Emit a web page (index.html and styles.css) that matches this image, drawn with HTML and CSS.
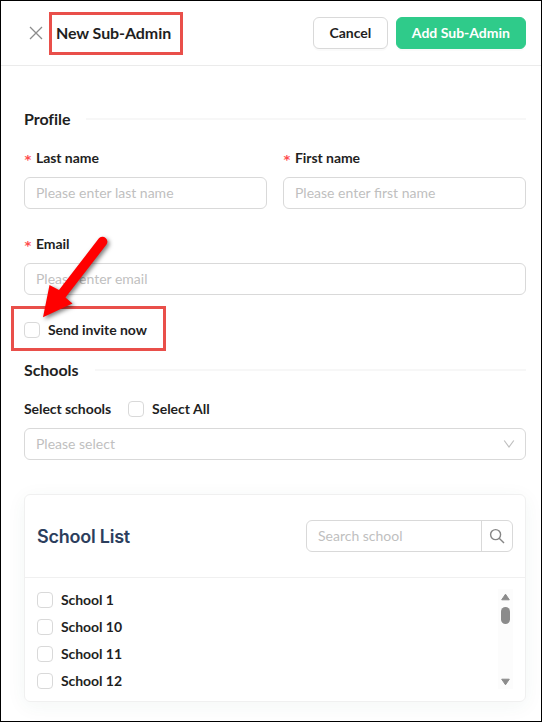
FILE: index.html
```html
<!DOCTYPE html>
<html lang="en">
<head>
<meta charset="utf-8">
<title>New Sub-Admin</title>
<link rel="stylesheet" href="styles.css">
</head>
<body>
<div class="drawer">
  <header class="header">
    <svg class="close" viewBox="0 0 14 14"><path d="M1 1 13 13M13 1 1 13"/></svg>
    <h1 class="title"><span>New Sub-Admin</span></h1>
    <button class="btn cancel">Cancel</button>
    <button class="btn primary">Add Sub-Admin</button>
  </header>
  <main class="body">
    <h2 class="divider"><span>Profile</span></h2>
    <div class="row">
      <div class="field">
        <label class="label"><i class="req">*</i><span>Last name</span></label>
        <div class="input"><span>Please enter last name</span></div>
      </div>
      <div class="field">
        <label class="label"><i class="req">*</i><span>First name</span></label>
        <div class="input"><span>Please enter first name</span></div>
      </div>
    </div>
    <div class="field email">
      <label class="label"><i class="req">*</i><span>Email</span></label>
      <div class="input"><span>Please enter email</span></div>
    </div>
    <div class="invite">
      <span class="box"></span><span>Send invite now</span>
      <svg class="arrow" viewBox="0 0 80 70"><path d="M66.700 5.600A4.900 4.900 0 0 1 74.300 11.800L33.500 64.500 40.500 70.500 11 84.300 17.500 52 27 57Z"/></svg>
    </div>
    <h2 class="divider schools"><span>Schools</span></h2>
    <div class="select-head">
      <span class="select-label">Select schools</span><span class="box"></span><span>Select All</span>
    </div>
    <div class="input select"><span>Please select</span>
      <svg class="chevron" viewBox="0 0 12 12"><path d="M1.200 2.500 6 9 10.800 2.500"/></svg>
    </div>
    <section class="card">
      <div class="card-head">
        <h3 class="card-title">School List</h3>
        <div class="search">
          <span class="search-text">Search school</span>
          <span class="search-btn"><svg class="lens" viewBox="0 0 16 16"><circle cx="6.600" cy="6.600" r="5"/><path d="M10.200 10.200 15 15"/></svg></span>
        </div>
      </div>
      <div class="list">
        <div class="items">
          <div class="item"><span class="box"></span>School 1</div>
          <div class="item"><span class="box"></span>School 10</div>
          <div class="item"><span class="box"></span>School 11</div>
          <div class="item"><span class="box"></span>School 12</div>
        </div>
        <div class="scrollbar">
          <svg class="tri" viewBox="0 0 9 8"><path d="M4.500 1.200 8.300 6.800H.7Z"/></svg>
          <div class="thumb"></div>
          <svg class="tri down" viewBox="0 0 9 8"><path d="M4.500 6.800 8.300 1.200H.7Z"/></svg>
        </div>
      </div>
    </section>
  </main>
</div>
</body>
</html>
```
FILE: styles.css
```css
* { box-sizing: border-box; }
body {
  margin: 0;
  font: 700 14px/22px Lato, sans-serif;
  color: #1f1f1f;
  background: #fff;
}
.drawer {
  width: 542px;
  height: 722px;
  border: 1px solid #000;
  overflow: hidden;
}
.header {
  display: flex;
  align-items: center;
  height: 65px;
  padding: 0 15px 0 28px;
  border-bottom: 1px solid #ebebeb;
}
.close { width: 14px; height: 14px; stroke: #8c8c8c; stroke-width: 1.3; fill: none; }
.title {
  display: flex;
  align-items: center;
  width: 134px;
  height: 43px;
  margin: 0 auto 0 6px;
  padding-left: 4px;
  border: 3px solid #e94f4a;
  font-size: 16px;
  font-weight: 700;
  letter-spacing: -.08px;
  white-space: nowrap;
}
.btn {
  height: 32px;
  padding: 0 15px;
  border: 1px solid #d9d9d9;
  border-radius: 6px;
  background: #fff;
  box-shadow: 0 2px 0 rgba(0,0,0,.02);
  color: #1f1f1f;
  font: 700 14px/22px Lato, sans-serif;
}
.cancel { width: 75px; }
.primary { margin-left: 8px; border-color: #2fcb8a; background: #2fcb8a; color: #fff; }
.body { padding: 41px 15px 0 23px; }
.divider {
  display: flex;
  align-items: center;
  gap: 16px;
  height: 24px;
  margin: 0;
  font-size: 16px;
  font-weight: 700;
  letter-spacing: -.05px;
}
.divider::after { content: ""; flex: 1; height: 2px; background: #f7f7f7; }
.row { display: grid; grid-template-columns: 1fr 1fr; gap: 16px; margin-top: 16px; }
.label { display: flex; height: 22px; margin-bottom: 8px; letter-spacing: -.06px; }
.req { width: 12px; color: #ff4d4f; font: 700 13px/25px "DejaVu Sans Mono", monospace; }
.input {
  display: flex;
  align-items: center;
  height: 32px;
  padding: 0 11px;
  border: 1px solid #d9d9d9;
  border-radius: 6px;
  color: #bfbfbf;
  font-weight: 400;
}
.email { margin-top: 24px; }
.invite {
  position: relative;
  display: flex;
  align-items: center;
  gap: 8px;
  width: 155px;
  height: 45px;
  margin: 11px 0 0 -13px;
  padding: 2px 0 0 10px;
  border: 3px solid #e94f4a;
  letter-spacing: -.06px;
}
.box { flex: none; width: 16px; height: 16px; border: 1px solid #d9d9d9; border-radius: 4px; background: #fff; }
.arrow {
  position: absolute;
  left: 18px;
  top: -76px;
  width: 80px;
  height: 70px;
  overflow: visible;
  fill: #f00;
  filter: drop-shadow(2px 2px 2px rgba(0,0,0,.5));
}
.schools { margin-top: 7px; }
.select-head { display: flex; align-items: center; height: 22px; margin-top: 16px; }
.select-label { width: 88px; white-space: nowrap; letter-spacing: -.06px; }
.select-head .box { margin: 0 8px 0 16px; }
.select { justify-content: space-between; margin-top: 8px; padding-right: 10px; }
.chevron { width: 12px; height: 12px; fill: none; stroke: #bfbfbf; stroke-width: 1.2; }
.card {
  height: 208px;
  margin-top: 34px;
  border: 1px solid #f0f0f0;
  border-radius: 6px;
  box-shadow: 0 4px 20px rgba(30,90,65,.055);
}
.card-head {
  display: flex;
  align-items: center;
  justify-content: space-between;
  height: 83px;
  padding: 0 12px;
  border-bottom: 1px solid #f0f0f0;
}
.card-title { margin: 0; padding-top: 2px; font: 600 18px/24px Inter, sans-serif; letter-spacing: -.23px; color: #2c3e5d; }
.search {
  display: flex;
  width: 207px;
  height: 32px;
  border: 1px solid #d9d9d9;
  border-radius: 6px;
  color: #bfbfbf;
  font-weight: 400;
  line-height: 30px;
}
.search-text { flex: 1; padding-left: 11px; }
.search-btn { display: grid; place-items: center; width: 31px; border-left: 1px solid #d9d9d9; }
.lens { width: 16px; height: 16px; fill: none; stroke: #858585; stroke-width: 1.4; }
.list { display: flex; justify-content: space-between; padding: 11px 12px 0; letter-spacing: -.06px; }
.item { display: flex; align-items: center; gap: 8px; height: 22px; margin-bottom: 5px; }
.scrollbar {
  display: flex;
  flex-direction: column;
  align-items: center;
  width: 15px;
  height: 100px;
  padding: 4px 0 3px;
  background: #fcfcfc;
}
.tri { width: 9px; height: 8px; fill: #8b8b8b; stroke: #8b8b8b; stroke-linejoin: round; }
.thumb { width: 9px; height: 17px; margin-top: 6px; border-radius: 5px; background: #8b8b8b; }
.down { margin-top: auto; }
```
